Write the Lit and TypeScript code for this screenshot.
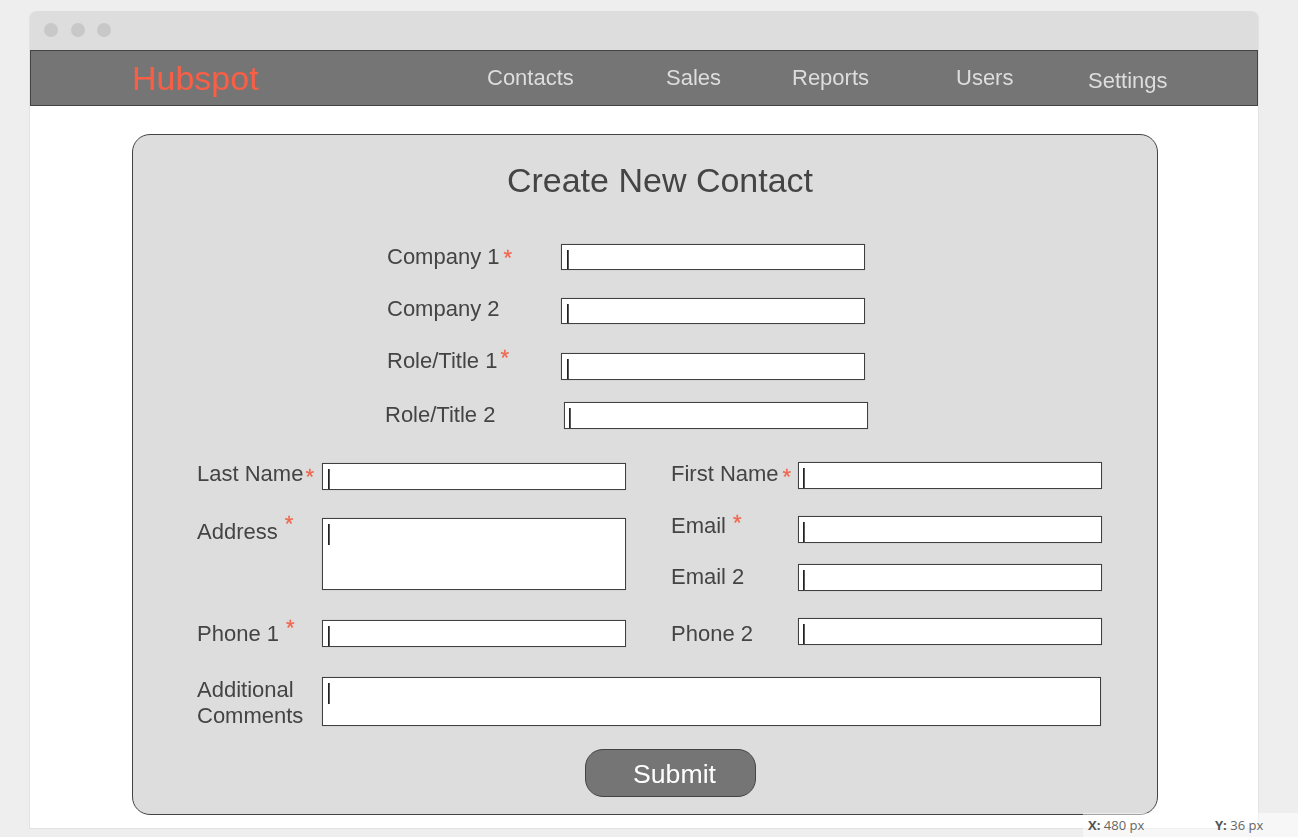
import { LitElement, html, css } from "lit";
import { customElement } from "lit/decorators.js";

@customElement("app-root")
export class AppRoot extends LitElement {
  static override styles = css`
    :host {
      display: block;
      position: relative;
      width: 1298px;
      height: 837px;
      padding: 11px 0 0 29px;
      box-sizing: border-box;
      overflow: hidden;
      background: #eeeeee;
      font-family: "Liberation Sans", Arial, sans-serif;
      color: #444444;
    }

    .window {
      width: 1230px;
      height: 818px;
      box-sizing: border-box;
      background: #ffffff;
      border: 1px solid #e2e2e2;
      border-top: none;
      border-radius: 6px 6px 0 0;
    }

    /* own layer on a clear background, so glyphs get grey antialiasing */
    .soft {
      will-change: transform;
    }

    .titlebar {
      display: flex;
      align-items: center;
      gap: 12.5px;
      height: 38px;
      padding: 0 0 1px 14px;
      background: #dddddd;
      border-radius: 6px 6px 0 0;
    }

    .dot {
      width: 14px;
      height: 14px;
      border-radius: 50%;
      background: #c8c8c8;
    }

    nav {
      display: flex;
      align-items: center;
      width: 1228px;
      height: 56px;
      box-sizing: border-box;
      background: #757575;
      border: 1px solid #444444;
      color: #dddddd;
      font-size: 22px;
    }

    .logo {
      width: 355px;
      margin-left: 101px;
      color: #fa5f46;
      font-size: 34px;
    }

    .link-contacts { width: 179px; }
    .link-sales { width: 126px; }
    .link-reports { width: 164px; }
    .link-users { width: 132px; }
    .link-settings { padding-top: 5px; }

    .card {
      width: 1026px;
      height: 681px;
      box-sizing: border-box;
      margin: 28px 0 0 102px;
      padding-top: 25px;
      background: #dddddd;
      border: 1px solid #444444;
      border-radius: 18px;
      font-size: 22px;
    }

    h1 {
      margin: 0 0 44px;
      padding-left: 30px;
      font-size: 34px;
      font-weight: 400;
      line-height: 40px;
      text-align: center;
    }

    .top {
      display: flex;
      flex-direction: column;
      margin-left: 254px;
    }

    .row {
      display: flex;
      align-items: flex-start;
    }

    .label {
      flex: none;
      line-height: 26px;
      white-space: nowrap;
    }

    .top .label { width: 174px; }

    .box {
      flex: none;
      box-sizing: border-box;
      width: 304px;
      height: 27px;
      padding-left: 3px;
      overflow: hidden;
      background: #ffffff;
      border: 1px solid #404040;
      box-shadow: 0 0 0.6px rgba(64, 64, 64, 0.8);
      color: #222222;
      font-size: 22px;
      line-height: 28px;
    }

    .caret { display: inline-block; }

    .short { height: 26px; }
    .tall { height: 72px; }
    .tight { padding-left: 2px; }

    .gap-21 { margin-top: 21px; }
    .gap-22 { margin-top: 22px; }
    .gap-27 { margin-top: 27px; }
    .gap-28 { margin-top: 28px; }
    .gap-29 { margin-top: 29px; }
    .gap-30 { margin-top: 30px; }

    .lift-1 { margin-top: -1px; }
    .lift-2 { margin-top: -2px; }
    .lift-3 { margin-top: -3px; }
    .lift-5 { margin-top: -5px; }
    .drop-1 { margin-top: 1px; }
    .drop-3 { margin-top: 3px; }

    .role-2 { margin-left: -2px; }
    .role-2 .label { width: 179px; }

    .columns {
      display: flex;
      gap: 45px;
      margin: 33px 0 0 64px;
    }

    .left { padding-top: 1px; }
    .left .label { width: 125px; }
    .right .label { width: 127px; }

    .comments {
      margin: 30px 0 0 64px;
    }

    .comments .label { width: 125px; }
    .comments .box { width: 779px; height: 49px; }

    .star {
      margin-left: 4px;
      color: #f0674f;
      -webkit-text-stroke: 0.3px #f0674f;
      line-height: 0;
      vertical-align: -3px;
    }

    .star.near { margin-left: 2px; }
    .star.mid { vertical-align: -1px; }
    .star.high { margin-left: 3px; vertical-align: 3px; }
    .star.address { margin-left: 7px; vertical-align: 8px; }
    .star.phone { margin-left: 7px; vertical-align: 6px; }
    .star.email { margin-left: 7px; vertical-align: 3px; }

    .actions {
      display: flex;
      margin: 20px 0 0 452px;
    }

    button {
      width: 171px;
      height: 48px;
      padding: 2px 0 0 8px;
      background: #757575;
      border: 1px solid #444444;
      border-radius: 18px;
      color: #ffffff;
      font: 26.67px "Liberation Sans", Arial, sans-serif;
    }

    .coords {
      position: absolute;
      right: 0;
      bottom: 0;
      display: flex;
      width: 215px;
      height: 24px;
      box-sizing: border-box;
      padding: 3px 0 0 5px;
      background: rgba(255, 255, 255, 0.5);
      color: #666666;
      font: 13px "Open Sans", sans-serif;
    }

    .coords span { flex: none; width: 127px; }
    .coords b { color: #555555; }
  `;

  private star(cls = "") {
    return html`<span class="star ${cls}">*</span>`;
  }

  private box(cls = "") {
    return html`<div class="box ${cls}"><span class="caret soft">|</span></div>`;
  }

  override render() {
    return html`
      <div class="window">
        <div class="titlebar">
          <div class="dot"></div>
          <div class="dot"></div>
          <div class="dot"></div>
        </div>
        <nav>
          <div class="logo soft">Hubspot</div>
          <div class="link-contacts soft">Contacts</div>
          <div class="link-sales soft">Sales</div>
          <div class="link-reports soft">Reports</div>
          <div class="link-users soft">Users</div>
          <div class="link-settings soft">Settings</div>
        </nav>
        <section class="card">
          <h1 class="soft">Create New Contact</h1>
          <div class="top">
            <div class="row">
              <div class="label soft">Company 1${this.star("mid")}</div>
              ${this.box("short")}
            </div>
            <div class="row gap-28">
              <div class="label soft lift-2">Company 2</div>
              ${this.box("short")}
            </div>
            <div class="row gap-29">
              <div class="label soft lift-5">Role/Title 1${this.star("high")}</div>
              ${this.box()}
            </div>
            <div class="row gap-22 role-2">
              <div class="label soft">Role/Title 2</div>
              ${this.box("tight")}
            </div>
          </div>
          <div class="columns">
            <div class="left">
              <div class="row">
                <div class="label soft lift-2">Last Name${this.star("near")}</div>
                ${this.box()}
              </div>
              <div class="row gap-28">
                <div class="label soft drop-1">Address${this.star("address")}</div>
                ${this.box("tall")}
              </div>
              <div class="row gap-30">
                <div class="label soft drop-1">Phone 1${this.star("phone")}</div>
                ${this.box()}
              </div>
            </div>
            <div class="right">
              <div class="row">
                <div class="label soft lift-1">First Name${this.star()}</div>
                ${this.box("tight")}
              </div>
              <div class="row gap-27">
                <div class="label soft lift-3">Email${this.star("email")}</div>
                ${this.box("tight")}
              </div>
              <div class="row gap-21">
                <div class="label soft">Email 2</div>
                ${this.box("tight")}
              </div>
              <div class="row gap-27">
                <div class="label soft drop-3">Phone 2</div>
                ${this.box("tight")}
              </div>
            </div>
          </div>
          <div class="row comments">
            <div class="label soft">Additional<br />Comments</div>
            ${this.box()}
          </div>
          <div class="actions"><button class="soft">Submit</button></div>
        </section>
      </div>
      <div class="coords">
        <span><b>X:</b> 480 px</span>
        <span><b>Y:</b> 36 px</span>
      </div>
    `;
  }
}
